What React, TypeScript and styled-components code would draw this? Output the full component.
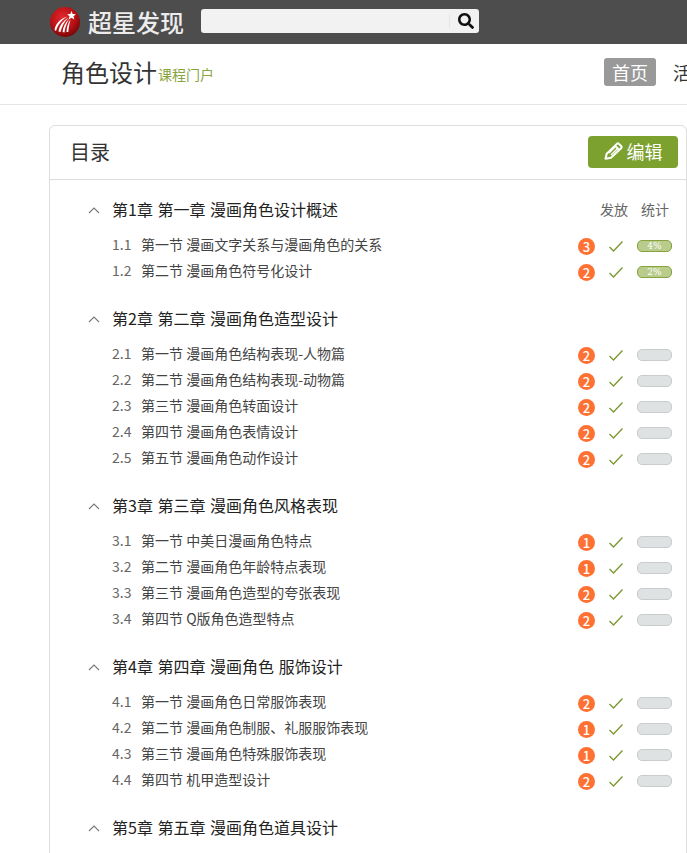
import styled, { createGlobalStyle } from "styled-components";
import { FaSearch } from "react-icons/fa";

const FONT = `"Noto Sans CJK SC", "Liberation Sans", sans-serif`;

const GlobalStyle = createGlobalStyle`
  html, body {
    margin: 0;
    padding: 0;
    background: #fff;
    overflow: hidden;
  }
  * { box-sizing: border-box; }
`;

const Page = styled.div`
  width: 687px;
  height: 853px;
  overflow: hidden;
  font-family: ${FONT};
  color: #333;
`;

const TopBar = styled.header`
  height: 44px;
  background: #4d4d4d;
  display: flex;
  align-items: center;
  padding-left: 50px;
`;

const LogoText = styled.span`
  margin: 0 0 1px 8px;
  width: 113px;
  font-size: 24px;
  line-height: 30px;
  font-weight: 500;
  color: #ececec;
`;

const SearchBox = styled.div`
  width: 278px;
  height: 24px;
  margin-bottom: 2px;
  background: #f2f2f2;
  border-radius: 3px;
  display: flex;
  align-items: center;
  justify-content: flex-end;
`;

const SearchButton = styled.span`
  width: 30px;
  height: 13px;
  border-left: 1px solid #e4e4e4;
  display: flex;
  align-items: center;
  padding-left: 8px;
  color: #111;
  font-size: 16px;
`;

const SubBar = styled.div`
  height: 61px;
  border-bottom: 1px solid #e5e5e5;
  display: flex;
  align-items: center;
  padding: 0 0 3px 61px;
`;

const CourseTitle = styled.h1`
  margin: 0 0 2px;
  font-size: 24px;
  line-height: 32px;
  font-weight: 400;
  color: #333;
`;

const CourseTag = styled.span`
  margin: 3px 0 0 1px;
  font-size: 14px;
  line-height: 20px;
  color: #8aa53f;
`;

const Nav = styled.nav`
  margin: 0 0 1px auto;
  display: flex;
  flex: none;
  width: 83px;
  overflow: hidden;
  gap: 17px;
`;

const NavItem = styled.span<{ $active?: boolean }>`
  flex: none;
  height: 28px;
  width: ${(p) => (p.$active ? "52px" : "auto")};
  border-radius: 3px;
  text-align: center;
  font-size: 18px;
  line-height: 28px;
  white-space: nowrap;
  color: ${(p) => (p.$active ? "#fff" : "#333")};
  background: ${(p) => (p.$active ? "#999" : "transparent")};
`;

const Card = styled.section`
  margin: 20px 0 0 49px;
  width: 638px;
  border: 1px solid #ddd;
  border-radius: 6px 6px 0 0;
`;

const CardHead = styled.div`
  height: 54px;
  border-bottom: 1px solid #ddd;
  display: flex;
  align-items: center;
  justify-content: space-between;
  padding: 0 8px 0 20px;
`;

const CardTitle = styled.h2`
  margin: 0 0 2px;
  font-size: 20px;
  line-height: 28px;
  font-weight: 400;
  color: #333;
`;

const EditButton = styled.button`
  width: 90px;
  height: 32px;
  margin-bottom: 1px;
  border: 0;
  padding: 0 0 2px;
  border-radius: 4px;
  background: #7ca12e;
  color: #fff;
  font-family: ${FONT};
  font-size: 18px;
  line-height: 30px;
  display: flex;
  align-items: center;
  justify-content: center;
  gap: 4px;
`;

const PencilIcon = styled.svg`
  width: 19px;
  height: 18px;
  flex: none;
`;

const CardBody = styled.div`
  padding: 15px 0 40px 38px;
  display: flex;
  flex-direction: column;
  gap: 20px;
`;

const ChapterHead = styled.div`
  height: 30px;
  display: flex;
  align-items: center;
`;

const Chevron = styled.svg`
  width: 12px;
  height: 7px;
  flex: none;
  margin-right: 12px;
`;

const ChapterTitle = styled.span`
  margin-bottom: 2px;
  font-size: 16px;
  word-spacing: 1px;
  line-height: 28px;
  color: #222;
  white-space: nowrap;
`;

const Columns = styled.div`
  margin: 0 17px 2px auto;
  display: flex;
  gap: 13px;
  font-size: 14px;
  line-height: 28px;
  color: #666;
`;

const SectionList = styled.ul`
  list-style: none;
  margin: 7px 0 0 24px;
  padding: 0;
`;

const SectionRow = styled.li`
  height: 26px;
  display: flex;
  align-items: center;
`;

const SectionNumber = styled.span`
  width: 29px;
  flex: none;
  margin-bottom: 2px;
  font-size: 14px;
  line-height: 24px;
  color: #666;
`;

const SectionTitle = styled.span`
  flex: 1;
  margin-bottom: 2px;
  font-size: 14px;
  line-height: 24px;
  color: #444;
  white-space: nowrap;
`;

const Badge = styled.span`
  width: 17px;
  height: 17px;
  flex: none;
  margin: 2px 14px 0 0;
  border-radius: 50%;
  background: #ff7033;
  color: #fff;
  font-size: 13px;
  font-weight: 500;
  line-height: 17px;
  text-align: center;
`;

const Check = styled.svg`
  width: 14px;
  height: 11px;
  flex: none;
  margin: 2px 14px 0 0;
`;

const Progress = styled.span<{ $done: boolean }>`
  width: 35px;
  height: 12px;
  flex: none;
  margin: 1px 14px 0 0;
  border-radius: 5px;
  border: 1px solid ${(p) => (p.$done ? "#86a340" : "#c9cccc")};
  background: ${(p) => (p.$done ? "#b9cc8c" : "#dfe2e2")};
  color: #fff;
  font-family: "DejaVu Serif", serif;
  font-size: 9px;
  line-height: 10px;
  text-align: center;
`;

type Section = { title: string; badge: number; progress?: string };
type Chapter = { title: string; sections: Section[] };

const chapters: Chapter[] = [
  {
    title: "第1章 第一章 漫画角色设计概述",
    sections: [
      { title: "第一节 漫画文字关系与漫画角色的关系", badge: 3, progress: "4%" },
      { title: "第二节 漫画角色符号化设计", badge: 2, progress: "2%" },
    ],
  },
  {
    title: "第2章 第二章 漫画角色造型设计",
    sections: [
      { title: "第一节 漫画角色结构表现-人物篇", badge: 2 },
      { title: "第二节 漫画角色结构表现-动物篇", badge: 2 },
      { title: "第三节 漫画角色转面设计", badge: 2 },
      { title: "第四节 漫画角色表情设计", badge: 2 },
      { title: "第五节 漫画角色动作设计", badge: 2 },
    ],
  },
  {
    title: "第3章 第三章 漫画角色风格表现",
    sections: [
      { title: "第一节 中美日漫画角色特点", badge: 1 },
      { title: "第二节 漫画角色年龄特点表现", badge: 1 },
      { title: "第三节 漫画角色造型的夸张表现", badge: 2 },
      { title: "第四节 Q版角色造型特点", badge: 2 },
    ],
  },
  {
    title: "第4章 第四章 漫画角色 服饰设计",
    sections: [
      { title: "第一节 漫画角色日常服饰表现", badge: 2 },
      { title: "第二节 漫画角色制服、礼服服饰表现", badge: 1 },
      { title: "第三节 漫画角色特殊服饰表现", badge: 1 },
      { title: "第四节 机甲造型设计", badge: 2 },
    ],
  },
  { title: "第5章 第五章 漫画角色道具设计", sections: [] },
];

function Logo() {
  return (
    <svg width="30" height="30" viewBox="0 0 30 30">
      <defs>
        <radialGradient id="ball" cx="42%" cy="35%" r="70%">
          <stop offset="0" stopColor="#e02a2e" />
          <stop offset="0.6" stopColor="#b81015" />
          <stop offset="1" stopColor="#6e0406" />
        </radialGradient>
      </defs>
      <circle cx="15" cy="15" r="15" fill="url(#ball)" />
      {/* fan of streaks running up to the star */}
      <g fill="#fff">
        <path d="M4.500 23c1-6 5-11 13-13.500-6 3.500-9.500 8-11.500 14.500z" />
        <path d="M8.500 24.500c1-6 4.500-10.500 10-14-4 4-6.500 8.500-8 14.500z" />
        <path d="M12.500 25c.5-5 3-10 7-13.500-2.500 4-4.500 8.500-5 14z" />
        <path d="M16.500 25c0-4.500 1.500-9 4-12.500-1 4-2 8.500-2.200 12.500z" />
      </g>
      <path d="M21.500 4l1.200 3 3.300.2-2.500 2.100.8 3.200-2.800-1.800-2.800 1.800.8-3.200-2.500-2.100 3.300-.2z" fill="#fff" />
    </svg>
  );
}

export default function App() {
  return (
    <Page>
      <GlobalStyle />
      <TopBar>
        <Logo />
        <LogoText>超星发现</LogoText>
        <SearchBox>
          <SearchButton>
            <FaSearch />
          </SearchButton>
        </SearchBox>
      </TopBar>
      <SubBar>
        <CourseTitle>角色设计</CourseTitle>
        <CourseTag>课程门户</CourseTag>
        <Nav>
          <NavItem $active>首页</NavItem>
          <NavItem>活动</NavItem>
        </Nav>
      </SubBar>
      <Card>
        <CardHead>
          <CardTitle>目录</CardTitle>
          <EditButton>
            <PencilIcon viewBox="0 0 19 18">
              <g fill="none" stroke="#fff" strokeWidth="2" strokeLinejoin="round">
                <path d="M1.500 16.800l1.200-5L12.800 1.900a1.600 1.600 0 0 1 2.200 0l2.100 2.100a1.600 1.600 0 0 1 0 2.200L7 15.800z" />
                <path d="M11 3.700l4.300 4.300" />
              </g>
              <path d="M4.500 10.500L11 4l1 1-6.500 6.500zM6.500 12.500L13 6l1 1-6.500 6.500z" fill="#fff" />
            </PencilIcon>
            编辑
          </EditButton>
        </CardHead>
        <CardBody>
          {chapters.map((chapter, c) => (
            <div key={chapter.title}>
              <ChapterHead>
                <Chevron viewBox="0 0 12 7">
                  <path d="M1 6l5-5 5 5" fill="none" stroke="#777" strokeWidth="1.1" />
                </Chevron>
                <ChapterTitle>{chapter.title}</ChapterTitle>
                {c === 0 && (
                  <Columns>
                    <span>发放</span>
                    <span>统计</span>
                  </Columns>
                )}
              </ChapterHead>
              {chapter.sections.length > 0 && (
                <SectionList>
                  {chapter.sections.map((section, s) => (
                    <SectionRow key={section.title}>
                      <SectionNumber>
                        {c + 1}.{s + 1}
                      </SectionNumber>
                      <SectionTitle>{section.title}</SectionTitle>
                      <Badge>{section.badge}</Badge>
                      <Check viewBox="0 0 14 11">
                        <path d="M.5 6l4 4L13.500.5" fill="none" stroke="#7c9a35" strokeWidth="1.4" />
                      </Check>
                      <Progress $done={!!section.progress}>{section.progress}</Progress>
                    </SectionRow>
                  ))}
                </SectionList>
              )}
            </div>
          ))}
        </CardBody>
      </Card>
    </Page>
  );
}
